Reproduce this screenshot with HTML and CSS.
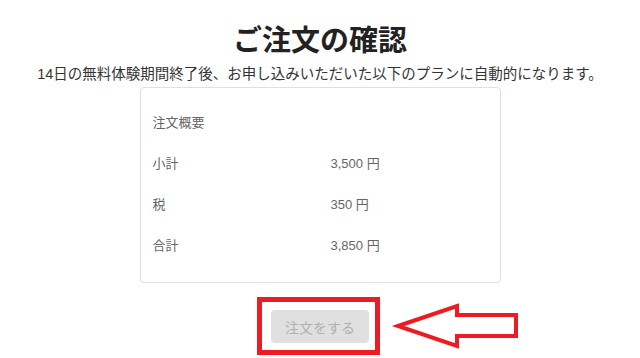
FILE: index.html
```html
<!DOCTYPE html>
<html lang="ja">
<head>
  <meta charset="UTF-8">
  <meta name="viewport" content="width=device-width, initial-scale=1">
  <title>ご注文の確認</title>
  <link rel="stylesheet" href="styles.css">
</head>
<body>
  <div class="page">
    <h1 class="title">ご注文の確認</h1>
    <p class="lead">14日の無料体験期間終了後、お申し込みいただいた以下のプランに自動的になります。</p>

    <!-- Order summary -->
    <div class="summary">
      <div class="summary-row">
        <span class="label">注文概要</span>
      </div>
      <div class="summary-row">
        <span class="label">小計</span>
        <span class="value">3,500 円</span>
      </div>
      <div class="summary-row">
        <span class="label">税</span>
        <span class="value">350 円</span>
      </div>
      <div class="summary-row">
        <span class="label">合計</span>
        <span class="value">3,850 円</span>
      </div>
    </div>

    <div class="actions">
      <button class="order-btn" disabled>注文をする</button>
    </div>
  </div>

  <!-- Annotation marks drawn over the page -->
  <div class="mark-box"></div>
  <svg class="mark-arrow" width="136" height="54" viewBox="0 0 136 54">
    <polygon points="8,26 67,6 67,15 126,15 126,36 67,36 67,46"
             fill="none" stroke="#ed1c24" stroke-width="4" stroke-linejoin="miter"/>
  </svg>
</body>
</html>
```

FILE: styles.css
```css
/* Basic styling */
* {
  margin: 0;
  padding: 0;
  box-sizing: border-box;
  font-family: "Liberation Sans", "Noto Sans CJK JP", sans-serif;
}
body {
  background-color: #fff;
  color: #222;
  position: relative;
  min-height: 100vh;
}

.page {
  display: flex;
  flex-direction: column;
  align-items: center;
  padding-top: 24px;
}

.title {
  font-size: 29px;
  line-height: 34px;
  font-weight: bold;
  color: #222;
}
.lead {
  margin-top: 6px;
  font-size: 14.5px;
  line-height: 20px;
  color: #333;
  white-space: nowrap;
}

/* Order summary card */
.summary {
  width: 361px;
  height: 196px;
  margin-top: 3px;
  padding: 13px 12px 0;
  border: 1px solid #e0e0e0;
  border-radius: 4px;
}
.summary-row {
  display: grid;
  grid-template-columns: 178px 1fr;
  align-items: center;
  height: 41px;
  font-size: 13px;
  color: #666;
}

.actions {
  margin-top: 27px;
}
.order-btn {
  width: 98px;
  height: 33px;
  border: none;
  border-radius: 4px;
  background: #e0e0e0;
  color: #b0b0b0;
  font-size: 14px;
}

/* Red annotation marks */
.mark-box {
  position: absolute;
  left: 257px;
  top: 297px;
  width: 123px;
  height: 58px;
  border: 5px solid #ed1c24;
}
.mark-arrow {
  position: absolute;
  left: 390px;
  top: 300px;
}
```
